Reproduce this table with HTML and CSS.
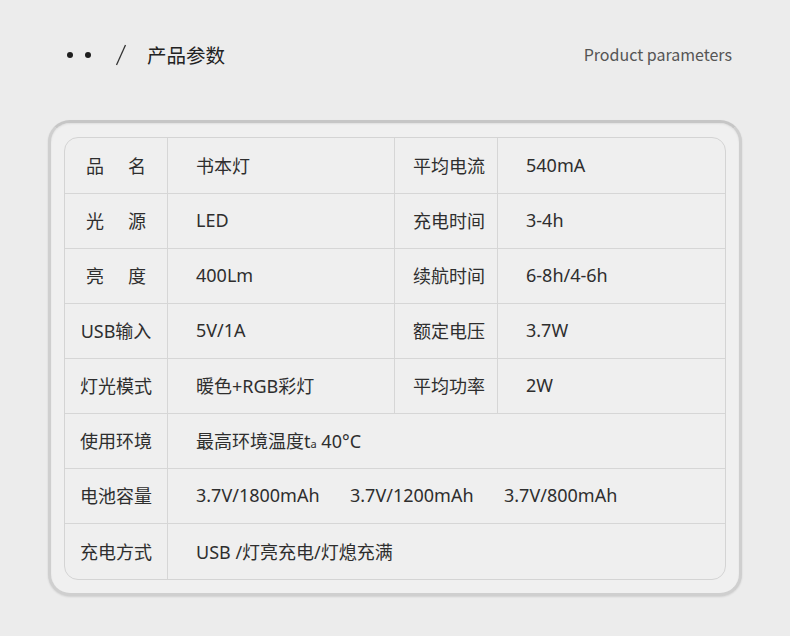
FILE: index.html
```html
<!DOCTYPE html>
<html lang="zh">
<head>
<meta charset="utf-8">
<link rel="stylesheet" href="styles.css">
</head>
<body>
<div class="page">
  <header class="head">
    <div class="title">
      <span class="dot"></span><span class="dot"></span>
      <svg class="slash" width="12" height="22" viewBox="0 0 12 22"><line x1="10.5" y1="1" x2="1.5" y2="21" stroke="#333" stroke-width="1.3"/></svg>
      <span class="cn">产品参数</span>
    </div>
    <div class="en">Product parameters</div>
  </header>
  <section class="card">
    <div class="table">
      <div class="c lab sp"><span>品</span><span>名</span></div>
      <div class="c val">书本灯</div>
      <div class="c lab2">平均电流</div>
      <div class="c val2">540mA</div>

      <div class="c lab sp"><span>光</span><span>源</span></div>
      <div class="c val">LED</div>
      <div class="c lab2">充电时间</div>
      <div class="c val2">3-4h</div>

      <div class="c lab sp"><span>亮</span><span>度</span></div>
      <div class="c val">400Lm</div>
      <div class="c lab2">续航时间</div>
      <div class="c val2">6-8h/4-6h</div>

      <div class="c lab">USB输入</div>
      <div class="c val">5V/1A</div>
      <div class="c lab2">额定电压</div>
      <div class="c val2">3.7W</div>

      <div class="c lab">灯光模式</div>
      <div class="c val">暖色+RGB彩灯</div>
      <div class="c lab2">平均功率</div>
      <div class="c val2">2W</div>

      <div class="c lab">使用环境</div>
      <div class="c val wide"><span>最高环境温度t<span class="sub">a</span> 40°C</span></div>

      <div class="c lab">电池容量</div>
      <div class="c val wide"><span class="cap">3.7V/1800mAh</span><span class="cap">3.7V/1200mAh</span><span class="cap">3.7V/800mAh</span></div>

      <div class="c lab last">充电方式</div>
      <div class="c val wide last">USB /灯亮充电/灯熄充满</div>
    </div>
  </section>
</div>
</body>
</html>
```
FILE: styles.css
```css
html, body {
  margin: 0;
  padding: 0;
  background: #ececec;
}
body {
  font-family: "Noto Sans", "Noto Sans CJK SC", sans-serif;
  color: #2e2e2e;
  width: 790px;
  height: 636px;
  overflow: hidden;
}
.page {
  padding: 0 48px;
}
.head {
  height: 110px;
  display: flex;
  align-items: center;
  justify-content: space-between;
}
.title {
  display: flex;
  align-items: center;
  padding-left: 19px;
}
.dot {
  width: 6px;
  height: 6px;
  border-radius: 50%;
  background: #1e1e1e;
  margin-right: 12px;
}
.slash {
  margin-left: 12px;
  display: block;
}
.cn {
  font-family: "Noto Sans CJK SC", sans-serif;
  font-size: 19.5px;
  margin-left: 20px;
  color: #222;
  margin-top: -2px;
}
.en {
  font-family: "Noto Sans CJK SC", sans-serif;
  font-size: 16px;
  color: #555;
  margin-right: 10px;
  margin-top: -2px;
}
.card {
  margin-top: 10px;
  height: 476px;
  box-sizing: border-box;
  border-radius: 22px;
  border: 3px solid #cfcfcf;
  border-top-color: #c6c6c6;
  background: #f0f0f0;
  box-shadow: 0 1px 2px rgba(0,0,0,0.12), inset 0 1px 2px rgba(0,0,0,0.07);
  padding: 14px 13px 0 13px;
}
.table {
  display: grid;
  grid-template-columns: 103px 227px 103px 1fr;
  grid-auto-rows: 55px;
  grid-template-rows: 56px;
  border: 1px solid #d4d4d4;
  border-radius: 14px;
  overflow: hidden;
  background: #efefef;
  font-size: 18px;
}
.c {
  display: flex;
  align-items: center;
  border-right: 1px solid #d6d6d6;
  border-bottom: 1px solid #d6d6d6;
  white-space: nowrap;
  padding-bottom: 2px;
  box-sizing: border-box;
}
.c.val2, .c.wide { border-right: none; }
.c.last { border-bottom: none; }
.lab {
  justify-content: center;
}
.lab2 { padding-left: 18px; }
.sp span + span { margin-left: 24px; }
.val { padding-left: 28px; }
.val2 { padding-left: 28px; }
.wide { grid-column: 2 / 5; }
.sub {
  font-size: 11px;
}
.cap { width: 154px; display: inline-block; }
```
